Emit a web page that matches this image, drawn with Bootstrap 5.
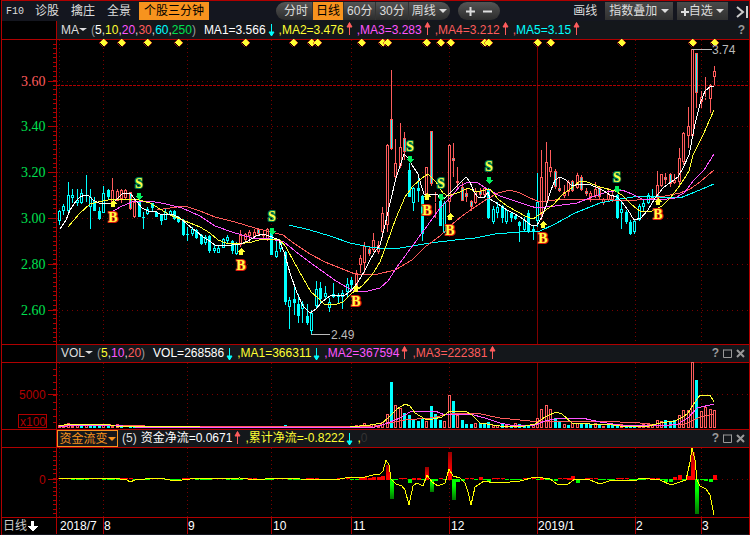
<!DOCTYPE html>
<html lang="zh-CN">
<head>
<meta charset="utf-8">
<meta name="viewport" content="width=device-width, initial-scale=1">
<title>日线</title>
<link href="https://cdn.jsdelivr.net/npm/bootstrap@5.3.0/dist/css/bootstrap.min.css" rel="stylesheet">
<style>
:root{--line:#b00000;--orange:#f7931e}
body{background:#000;font:12px/16px "Liberation Sans","Noto Sans CJK SC",sans-serif;color:#ddd}
button{font:inherit;color:inherit;background:none;border:0;padding:0;white-space:nowrap}
.frame{margin-left:1px;border:1px solid var(--line);border-bottom:0;overflow:hidden}
.tools{height:20px;background:#14161f;white-space:nowrap}
.tools button{height:18px;line-height:19px}
.fkey{font-family:"Liberation Mono",monospace;font-size:10px;width:21px;text-align:left}
.tools .hot{background:var(--orange);color:#000}
.promo{width:70px}
.periods{margin-left:67px;height:18px;border-radius:9px;background:linear-gradient(#555,#2c2c2c);overflow:hidden}
.periods button+button{border-left:1px solid #333}
.periods .tight{padding:0 3px}
.zoomer{height:18px;width:42px;border-radius:9px;background:linear-gradient(#555,#2c2c2c)}
.tools .zoomer button{line-height:17px}
.tools .box{background:linear-gradient(#4a4a4a,#303030);padding:0 4px}
.caret{display:inline-block;border:4px solid transparent;border-top-color:currentColor;border-bottom:0;vertical-align:2px}
.caret.tiny{border-width:3px 4px 0;vertical-align:3px}
.strip{height:17px;white-space:nowrap}
.strip.first{height:18px}
.gutter{flex:0 0 55px;border-right:1px solid var(--line);background:#000}
.legend-row{background:#14171b;line-height:17px}
.first .legend-row{line-height:19px}
.ar{width:13px;height:16px;flex:none}
.w{color:#fff}.y{color:#ff3}.m{color:#f5f}.r{color:#ff5c5c}.c{color:#0ff}.g{color:#00e050}.dim{color:#333}.gray{color:#999}
.pick{border:1px solid var(--orange);color:var(--orange);height:17px;line-height:14px;width:61px}
svg.plot{display:block;width:100%;height:auto;shape-rendering:crispEdges}
svg.plot text{font-family:"Liberation Sans",sans-serif;font-size:12px}
svg.plot .num{font-family:"Liberation Serif",serif;font-size:14px}
svg.plot .sig{font-family:"Liberation Serif",serif;font-size:14px;font-weight:bold;paint-order:stroke;stroke-width:2px;fill:#ff4}
.foot{color:#ccc;line-height:16px}
</style>
</head>
<body>
<main class="frame">
<nav class="tools d-flex align-items-center">
  <div class="d-flex ps-1">
    <button class="fkey">F10</button>
  </div>
  <div class="d-flex">
    <button class="px-2">诊股</button><button class="ps-1 pe-2">擒庄</button><button class="ps-1 pe-1 me-1">全景</button>
  </div>
  <button class="hot promo">个股三分钟</button>
  <div class="periods d-flex">
    <button class="ps-2 pe-1">分时</button><button class="hot tight">日线</button><button class="tight">60分</button><button class="tight">30分</button><button class="tight">周线 <span class="caret"></span></button>
  </div>
  <div class="zoomer d-flex ms-2 align-items-center justify-content-around px-1">
    <button aria-label="放大"><svg width="9" height="9"><path d="M4.500 0v9M0 4.500h9" stroke="#ddd" stroke-width="2"/></svg></button>
    <button aria-label="缩小"><svg width="9" height="9"><path d="M0 4.500h9" stroke="#ddd" stroke-width="2"/></svg></button>
  </div>
  <div class="d-flex gap-1 ms-auto">
    <button class="me-1">画线</button>
    <button class="box">指数叠加 <span class="caret"></span></button>
    <button class="box px-1"><svg width="8" height="8"><path d="M4 0v8M0 4h8" stroke="#ddd" stroke-width="2"/></svg>自选 <span class="caret"></span></button>
    <button class="ms-1" aria-label="收起"><svg width="13" height="12"><path d="M1 1l6 5-6 5M11 0v12" fill="none" stroke="#ccc" stroke-width="2"/></svg></button>
  </div>
</nav>

<div class="strip first d-flex">
  <div class="gutter"></div>
  <div class="legend-row d-flex flex-fill ps-1">
    <button class="me-1">MA<span class="caret tiny"></span></button>
    <span class="me-2"><span class="gray">(</span><span class="w">5</span>,<span class="y">10</span>,<span class="m">20</span>,<span class="r">30</span>,<span class="c">60</span>,<span class="g">250</span><span class="gray">)</span></span>
    <span class="w">MA1=3.566</span><i class="ar" data-d="down"></i>
    <span class="y">,MA2=3.476</span><i class="ar" data-d="up"></i>
    <span class="m">,MA3=3.283</span><i class="ar" data-d="up"></i>
    <span class="r">,MA4=3.212</span><i class="ar" data-d="up"></i>
    <span class="c"><span class="r">,</span>MA5=3.15</span><i class="ar" data-d="up"></i>
    <button class="gray fw-bold ms-auto me-1">?</button>
  </div>
</div>
<svg class="plot" id="price" viewBox="2 39 747 306"></svg>

<div class="strip d-flex">
  <div class="gutter"></div>
  <div class="legend-row d-flex flex-fill ps-1">
    <button class="me-1">VOL<span class="caret tiny"></span></button>
    <span class="me-2"><span class="gray">(</span><span class="y">5</span>,<span class="m">10</span>,<span class="r">20</span><span class="gray">)</span></span>
    <span class="w">VOL=268586</span><i class="ar" data-d="down"></i>
    <span class="y">,MA1=366311</span><i class="ar" data-d="down"></i>
    <span class="m">,MA2=367594</span><i class="ar" data-d="up"></i>
    <span class="r">,MA3=222381</span><i class="ar" data-d="up"></i>
    <span class="tail ms-auto d-flex gap-1 pe-1"></span>
  </div>
</div>
<svg class="plot" id="volume" viewBox="2 362 747 68"></svg>

<div class="strip d-flex">
  <div class="gutter"></div>
  <div class="legend-row d-flex flex-fill">
    <button class="pick me-1">资金流变<span class="caret"></span></button>
    <span class="me-1">(5)</span>
    <span class="w">资金净流=0.0671</span><i class="ar" data-d="up"></i>
    <span class="y">,累计净流=-0.8222</span><i class="ar" data-d="down"></i>
    <span class="y">,<span class="dim">0</span></span>
    <span class="tail ms-auto d-flex gap-1 pe-1"></span>
  </div>
</div>
<svg class="plot" id="flow" viewBox="2 447 747 71"></svg>
<svg class="plot" id="months" viewBox="2 518 747 17">
  <foreignObject x="3" y="518" width="50" height="16"><button class="foot">日线<svg width="12" height="11"><path d="M4 0h3v5h4L5.500 10.500 0 5h4z" fill="#fff"/></svg></button></foreignObject>
</svg>
</main>

<script>
// one trading day per entry: high, body top, body bottom, low, kind
// kinds: r hollow rise, R outlined rise, c solid fall, C hollow fall
const days = `210,211,221,225,C 204,206,211,215,C 182,195,211,212,C 189,195,198,203,C 189,200,203,206,C 189,193,203,204,C 175,195,196,202,c 189,197,207,229,C 197,201,211,211,c 207,211,219,220,c
186,193,213,213,C 189,190,197,200,c 178,190,202,202,r 189,191,201,201,r 189,190,199,203,r 189,190,198,199,r 192,192,209,210,R 200,202,217,218,r 200,202,217,217,c 212,217,218,229,c
207,209,214,215,C 203,203,208,212,c 211,212,217,217,c 214,215,221,225,c 208,212,220,220,C 210,211,215,216,C 210,211,219,220,c 216,217,222,223,c 219,220,235,236,c 227,234,235,241,c
227,229,234,236,C 229,230,238,239,c 234,235,244,245,c 235,237,243,245,C 235,236,251,253,c 244,248,251,253,C 245,248,253,253,C 238,239,248,248,C 235,237,241,244,C 240,241,251,254,c
242,243,254,255,C 230,235,245,247,r 233,234,240,241,r 230,232,236,242,r 229,232,237,238,r 228,229,234,235,R 231,234,236,239,r 228,229,240,241,r 230,233,255,255,c 238,251,257,258,C
242,243,249,252,C 251,252,302,305,c 297,300,307,329,C 285,299,303,315,c 294,304,316,323,c 301,304,309,323,C 304,316,323,325,c 310,313,331,334,C 281,289,306,308,C 282,288,299,303,c
286,293,297,299,C 298,302,308,312,C 283,294,297,298,C 293,295,297,303,c 290,293,297,309,C 278,284,292,297,C 277,280,285,290,c 270,273,286,290,r 255,258,265,273,r 242,246,263,273,r
247,249,254,256,R 233,240,250,252,r 241,245,252,254,r 207,213,232,238,r 144,145,225,232,r 70,119,149,150,R 139,163,177,179,r 123,147,166,168,r 132,138,152,160,R 163,170,197,197,c
187,188,203,211,C 178,188,191,202,c 195,196,234,241,c 167,167,194,196,r 131,131,184,186,R 192,202,203,218,r 200,201,226,226,c 201,203,232,233,C 144,145,202,213,r 143,158,161,177,R
167,181,183,190,r 182,187,201,201,R 188,193,197,202,R 200,201,207,211,R 188,191,203,204,r 188,191,195,198,R 187,188,195,198,r 188,189,218,219,c 206,209,222,224,C 202,207,213,218,C
205,206,218,223,c 209,210,222,224,C 212,213,218,222,c 214,216,219,220,c 221,222,226,242,c 217,220,230,231,C 210,213,232,233,c 225,229,232,240,c 173,202,221,227,C 150,177,215,220,r
142,162,202,204,r 150,167,172,177,r 169,171,187,189,R 177,188,191,192,R 185,192,196,198,r 180,182,192,196,r 180,181,191,192,R 173,175,188,189,r 175,177,190,191,R 188,191,194,196,R
191,193,197,202,r 182,189,196,198,r 186,187,197,199,R 198,199,203,205,r 188,194,200,201,r 191,195,200,202,r 194,195,218,219,c 200,209,213,229,C 210,212,222,224,c 220,222,234,235,c
219,221,232,234,C 204,206,220,221,C 200,203,207,212,C 193,195,203,204,C 189,197,198,200,c 171,185,196,200,r 174,174,186,187,r 173,177,180,184,R 173,174,184,187,R 174,180,183,184,r
148,158,182,187,r 132,133,162,165,r 107,126,136,148,r 49,49,136,137,r 53,53,93,108,R 91,97,102,108,r 77,97,98,100,r 84,85,99,113,r 66,71,77,85,r`.trim().split(/\s+/).map(s=>s.split(','));
const X = i => Math.floor(59.45+4.427*i);
const RED='#ff5c5c', CY='#00ffff', line='#b00000', dots='#780000';
const rect=(x,y,w,h,f,s)=>s?`<rect x="${x+.5}" y="${y+.5}" width="${Math.max(w-1,0)}" height="${Math.max(h-1,0)}" fill="${f}" stroke="${s}"/>`:`<rect x="${x}" y="${y}" width="${w}" height="${h}" fill="${f}"/>`;
const hl=(y,c=line,d='')=>`<path d="M57 ${y+.5}H749" stroke="${c}" stroke-dasharray="${d}"/>`;
const full=y=>`<path d="M2 ${y+.5}H749" stroke="${line}"/>`;
const poly=(p,c)=>`<polyline points="${p}" fill="none" stroke="${c}"/>`;
const grid=(a,b)=>[59,103,187,271,351,449,635,701].map(x=>`<path d="M${x+.5} ${a}V${b}" stroke="${dots}" stroke-dasharray="1 3"/>`).join('')+`<path d="M537.5 ${a}V${b}" stroke="#800000"/>`;
const axis=(a,b,step)=>{let s=`<path d="M56.5 ${a}V${b}" stroke="${line}"/>`;for(let y=a+step;y<b-1;y+=step)s+=rect(53,Math.round(y),3,1,line);return s};
const put=(id,s)=>document.getElementById(id).insertAdjacentHTML('beforeend',s);

// price
let s=axis(39,345,4.58)+grid(40,344);
[['3.60',81,RED],['3.40',126,'#00e050'],['3.20',172,'#00e050'],['3.00',218,'#00e050'],['2.80',264,'#00e050'],['2.60',310,'#00e050']].forEach(([t,y,c])=>{
  s+=hl(y,dots,'1 4')+rect(48,y,8,1,line)+`<text class="num" x="21" y="${y+5}" fill="${c}">${t}</text>`});
s+=hl(85,'#b00000','3 1')+full(39)+full(344);
days.forEach(([h,t,b,l,k],i)=>{h=+h;t=+t;b=+b;l=+l;
  const x=X(i),c=k=='r'||k=='R'?RED:CY;
  if(h<t)s+=rect(x,h,1,t-h,c); if(l>b)s+=rect(x,b,1,l-b,c);
  s+=rect(x-1,t,3,b-t,k=='r'||k=='C'?'#000':CY,k=='c'?'':c)});
s+=poly('289,225 310,230 330,236 350,243 370,247 385,249 400,248 430,243 455,240 475,238 495,234 520,232 540,231 555,224 575,213 600,203 620,199 640,196 660,197 680,198 695,192 714,184',CY);
s+=poly('157,210 170,208 185,206 200,211 215,217 235,222 255,228 271,232 283,235 295,244 310,254 325,262 340,268 355,274 378,274 395,270 412,260 425,247 440,236 450,226 462,216 475,207 487,199 498,193 510,190 520,193 530,198 540,202 555,200 577,199 600,199 625,201 650,199 665,196 680,193 690,189 700,182 714,170',RED);
s+=poly('112,212 120,207 132,202 150,201 166,204 182,208 200,216 215,226 232,232 252,238 270,239 284,242 295,251 308,261 322,271 336,281 348,288 355,291 368,291 380,288 388,281 397,267 408,252 419,237 430,222 440,208 450,198 460,186 468,182 478,183 487,189 500,196 515,201 530,206 537,208 555,206 577,203 592,197 607,192 622,190 632,194 642,199 660,200 675,198 684,193 694,180 704,170 714,154','#ff55ff');
s+=poly('68,227 80,213 90,204 98,202 108,200 126,199 139,200 150,203 160,209 170,215 180,219 190,223 200,227 210,233 218,240 226,243 238,244 252,242 262,239 271,239 280,240 286,247 294,262 303,278 311,292 318,298 324,304 334,305 343,302 352,293 362,286 372,275 380,262 387,243 396,218 405,197 413,186 422,178 428,174 436,182 443,193 448,196 460,192 468,188 476,192 490,189 498,199 507,206 518,212 525,216 533,219 543,212 553,205 563,194 573,187 580,181 587,182 600,187 615,191 622,195 632,205 640,211 652,211 662,206 670,198 678,188 684,179 689,171 693,155 703,135 714,110','#ffff33');
s+=poly('60,229 66,220 70,210 76,201 80,197 85,195 89,196 93,200 99,203 106,204 113,203 118,198 122,194 126,193 131,194 137,202 142,208 148,211 155,211 160,214 168,214 174,215 180,218 188,225 196,231 203,237 208,240 215,245 222,245 232,245 240,244 248,241 256,236 263,234 272,237 279,240 284,252 290,273 297,293 303,306 310,313 316,309 322,302 330,296 337,295 345,295 352,290 358,282 364,272 370,260 376,250 380,245 385,225 390,203 396,178 404,154 408,158 412,165 418,174 421,185 424,194 431,195 437,194 442,200 446,197 452,191 458,185 466,177 470,182 474,192 478,197 484,198 488,192 490,199 498,204 507,210 515,214 523,219 531,225 537,225 542,217 547,203 551,190 555,180 560,177 566,180 572,186 580,184 588,184 596,187 604,191 610,195 617,197 622,202 628,210 634,220 641,218 648,210 655,198 663,188 671,182 678,177 683,168 689,155 695,124 700,104 705,91 711,86 714,87','#ffffff');
[103,121,147,178,245,293,311,317,361,382,387,426,440,450,484,488,537,550,621,692,714].forEach(x=>s+=`<path d="M${x+.5} 38.500l4 4-4 4-4-4z" fill="#ff3" stroke="#c22" stroke-width=".6"/>`);
[[139,188,196],[272,221,231],[410,151,159],[441,188,197],[489,171,180],[617,182,189]].forEach(([x,y,a])=>
  s+=`<text class="sig" stroke="#008050" text-anchor="middle" x="${x}" y="${y}">S</text><path d="M${x-2} ${a-3}h4v3h2l-4 4-4-4h2z" fill="#00f060"/>`);
[[113,222,204],[241,270,252],[356,306,289],[427,215,197],[450,235,217],[543,243,225],[658,219,202]].forEach(([x,y,a])=>
  s+=`<text class="sig" stroke="#e02010" text-anchor="middle" x="${x}" y="${y}">B</text><path d="M${x-2} ${a+3}h4v-3h2l-4-4-4 4h2z" fill="#ff3"/>`);
s+=rect(692,49,20,1,'#bbb')+rect(311,334,19,1,'#bbb')+'<text x="712" y="54" fill="#bbb">3.74</text><text x="331" y="339" fill="#bbb">2.49</text>';
put('price',s);

// volume
const vols='3r 3r 5r 2r 3r 3c 4r 4c 3c 3c 3r 4c 2r 4r 2c 1r 2c 2c 1r 2c 1r 1c 1r 1c 1r 1r 1c 1r 1r 1r 1r 1r 1r 1r 1r 1r 1r 1r 1r 1c 1r 2r 1r 1r 1r 1r 2r 1r 2r 1r 1r 3c 2c 1r 2c 1c 2r 2c 2c 2r 1c 1c 1r 1c 1r 2c 2c 3r 3r 5r 3r 4r 2r 6r 14r 46c 23r 20r 15c 13c 8c 7c 9c 7r 22c 14c 8c 7r 33r 27c 13r 8c 4c 4c 5r 5c 4c 6c 3r 3r 5c 3r 3c 5r 4c 3c 3c 3r 10r 19r 23r 19r 10c 6c 4r 3c 5r 5r 4c 4c 4c 5r 3c 2r 3c 3c 2c 4r 3c 3c 1c 2r 4r 5r 3r 8r 7r 8c 7c 8c 13r 18r 18r 66r 48c 17r 21r 19r 18r'.split(' ');
s=axis(362,430,6.7)+grid(363,429)+hl(394,dots,'1 4')+rect(48,394,8,1,line)+full(362)+full(429);
vols.forEach((v,i)=>{const h=parseInt(v),r=v.endsWith('r');s+=rect(X(i)-1,428-h,3,h,r?'#000':CY,r?RED:'')});
s+=poly('59,426 110,425 180,427 375,426 390,423 405,420 430,418 450,414 476,413 500,418 530,421 600,421 640,423 660,426 685,424 700,417 714,414',RED);
s+=poly('59,427 75,425 110,425 135,427 375,427 385,424 400,418 410,412 435,411 445,415 455,414 470,414 485,418 500,423 510,425 535,425 545,421 560,418 582,418 600,422 620,425 660,426 678,424 688,418 697,408 714,404','#ff55ff');
s+=poly('59,426 70,424 105,424 115,426 200,427 350,427 370,425 382,423 388,418 397,409 405,404 410,406 415,413 425,419 433,419 442,417 450,411 465,411 472,415 480,423 500,426 520,427 535,424 545,417 556,412 562,414 572,423 590,424 605,424 620,426 645,427 660,423 675,421 683,417 688,413 693,405 700,395 710,395 714,402','#ffff33');
s+=`<text x="19" y="399" fill="${line}">5000</text>`+rect(18,414,29,14,'none',line)+`<text x="20" y="426" fill="${line}">x100</text>`;
put('volume',s);

// money flow
const big={68:1,69:2,70:1,71:2,72:2,73:3,74:14,75:-20,76:-1,79:-4,80:1,81:1,83:12,84:-13,85:-2,88:27,89:-21,90:-3,91:-2,95:2,97:-3,109:1,110:-1,112:-2,115:1,116:3,117:-4,125:-2,137:-3,138:-3,139:2,140:4,141:-2,142:3,143:27,144:-35,146:-2,147:-3,148:4};
s='<defs><linearGradient id="gu" x1="0" y1="1" x2="0" y2="0"><stop offset=".3" stop-color="#f00"/><stop offset="1" stop-color="#900"/></linearGradient><linearGradient id="gd" x1="0" y1="0" x2="0" y2="1"><stop offset=".3" stop-color="#0f0"/><stop offset="1" stop-color="#070"/></linearGradient></defs>'+axis(447,518,4.4)+grid(448,517)+hl(479,dots,'1 4')+rect(48,479,8,1,line)+full(447)+full(517);
vols.forEach((v,i)=>{const h=big[i]??0,x=X(i)-1;
  if(h>0)s+=rect(x,479-h,4,h+1,h>6?'url(#gu)':'#f00');
  else if(h<0)s+=rect(x,479,4,-h,h<-6?'url(#gd)':'#0f0');
  else s+=rect(x,i%7<3?478:479,4,1,i%7<3?'#f00':'#0f0')});
s+=poly('59,479 64,478 75,479 95,478 108,478 120,479 127,480 130,482 135,480 155,478 165,479 175,481 190,479 240,478 255,480 275,478 300,479 335,480 350,477 365,477 373,475 380,474 383,471 386,460 389,465 391,479 396,484 402,486 405,490 409,505 413,486 417,483 423,486 427,475 432,482 438,486 445,483 449,469 453,476 460,478 465,483 468,492 471,505 475,487 484,481 495,483 510,482 520,481 535,477 550,479 557,484 567,485 575,479 590,480 600,484 612,480 635,481 640,478 660,480 671,485 680,482 686,480 690,462 692,448 695,460 697,480 700,486 706,489 710,495 714,515','#ffff00');
s+=`<text x="39" y="484" fill="${line}">0</text>`;
put('flow',s);

// month labels
s=rect(56,518,1,17,line);
[[60,'2018/7'],[104,'8'],[188,'9'],[273,'10'],[353,'11'],[451,'12'],[538,'2019/1'],[636,'2'],[702,'3']].forEach(([x,t],i)=>{
  if(i)s+=rect([0,103,187,271,351,449,537,635,701][i],518,1,16,line);
  s+=`<text x="${x}" y="530" fill="#fff">${t}</text>`});
put('months',s+rect(2,534,747,1,'#14161f'));

document.querySelectorAll('.ar').forEach(e=>e.innerHTML=e.dataset.d=='up'
 ?'<svg class="d-block" width="13" height="16"><path d="M5.500 14V2M3 6L5.500 1.500 8 6z" stroke="#ff5c5c" fill="#ff5c5c"/></svg>'
 :'<svg class="d-block" width="13" height="16"><path d="M5.500 3V15M3 11l2.500 4L8 11z" stroke="#0ff" fill="#0ff"/></svg>');
document.querySelectorAll('.tail').forEach(e=>e.innerHTML='<button class="gray fw-bold">?</button><button aria-label="最大化"><svg class="d-block" width="9" height="9"><path d="M.5 1h8M.5 .5v8h8v-8" fill="none" stroke="#999"/></svg></button><button aria-label="关闭"><svg class="d-block" width="9" height="9"><path d="M1 1l7 7M8 1L1 8" stroke="#999" stroke-width="2"/></svg></button>');
</script>
<script src="https://cdn.jsdelivr.net/npm/bootstrap@5.3.0/dist/js/bootstrap.bundle.min.js"></script>
</body>
</html>
